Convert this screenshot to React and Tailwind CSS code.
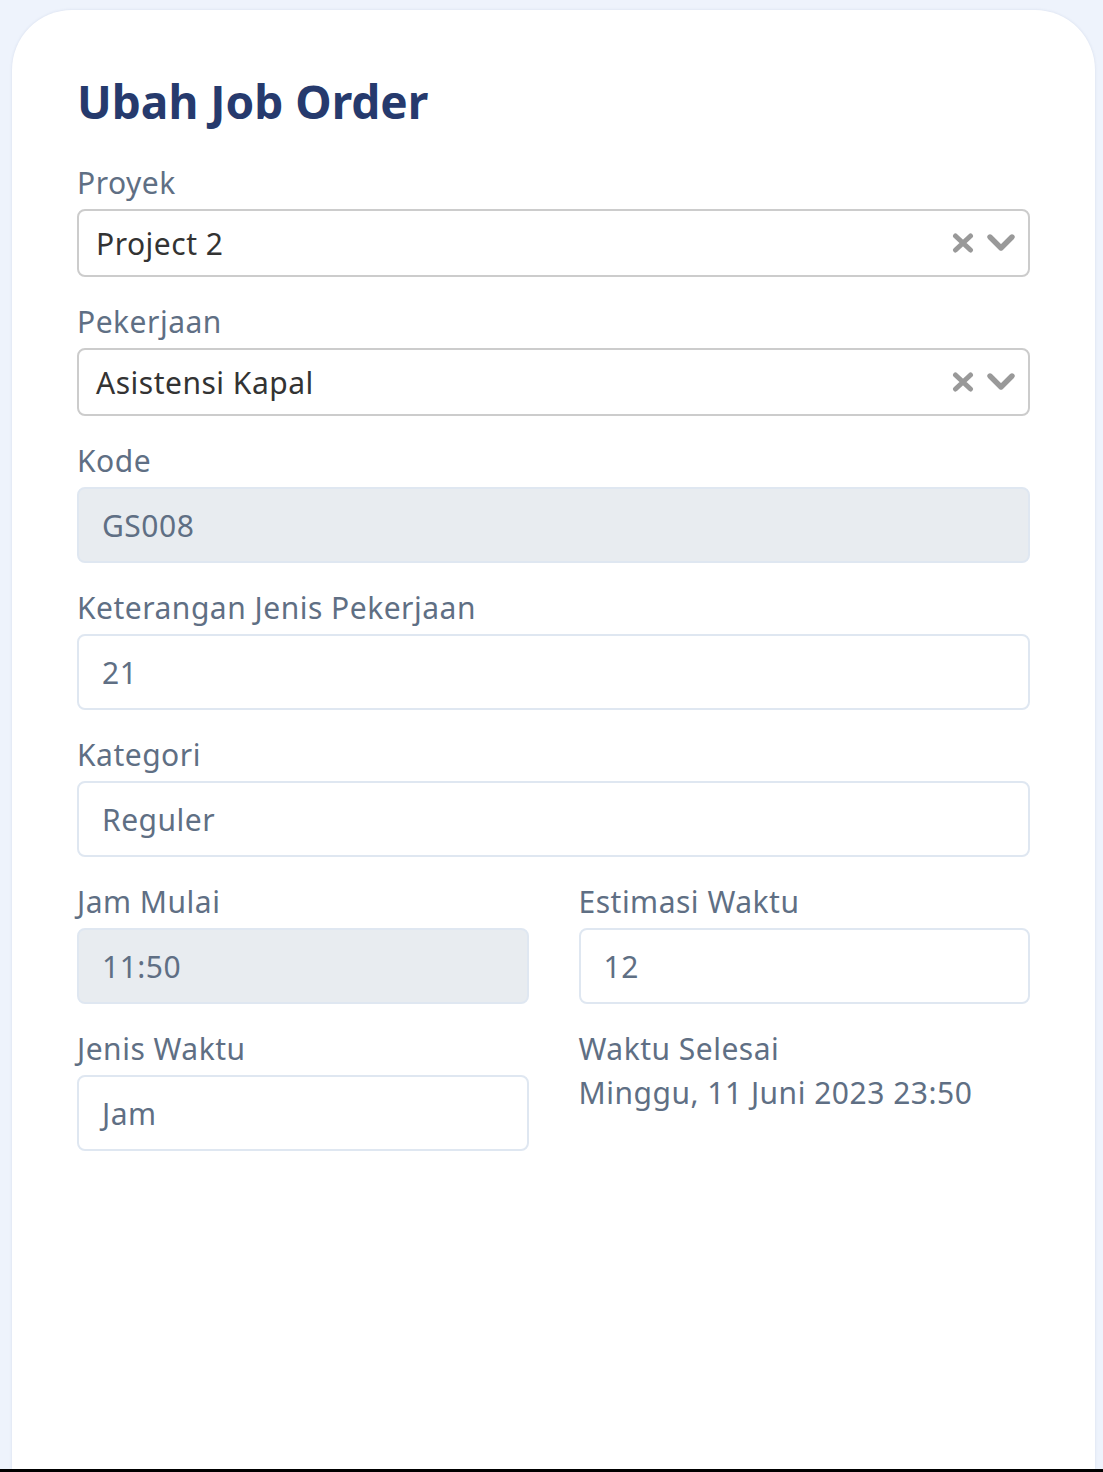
import React from "react";

const font = { fontFamily: '"Noto Sans", "Open Sans", sans-serif' };

function Label({ children }) {
  return (
    <div className="mb-[8px] text-[30px] leading-[36px] tracking-[0.5px] text-[#5f6f84]">
      {children}
    </div>
  );
}

function ClearIcon() {
  return (
    <svg width="24" height="20" viewBox="0 0 24 20" className="text-[#999999]">
      <path
        d="M4.5 3 L19.5 17 M19.5 3 L4.5 17"
        stroke="currentColor"
        strokeWidth="5"
        strokeLinecap="round"
      />
    </svg>
  );
}

function ChevronIcon() {
  return (
    <svg width="32" height="22" viewBox="0 0 32 22" className="text-[#999999]">
      <path
        d="M5 5 L16 16 L27 5"
        stroke="currentColor"
        strokeWidth="5.4"
        strokeLinecap="round"
        strokeLinejoin="round"
        fill="none"
      />
    </svg>
  );
}

function SelectField({ label, value }) {
  return (
    <div>
      <Label>{label}</Label>
      <div className="flex h-[68px] items-center rounded-[8px] border-2 border-[#cccccc] bg-white pl-[17px] pr-[11px]">
        <span className="flex-1 text-[30px] tracking-[0.5px] text-[#333333]">
          {value}
        </span>
        <div className="flex items-center gap-[10px]">
          <ClearIcon />
          <ChevronIcon />
        </div>
      </div>
    </div>
  );
}

function InputField({ label, value, disabled }) {
  return (
    <div>
      <Label>{label}</Label>
      <div
        className={
          "flex h-[76px] items-center rounded-[8px] border-2 border-[#dfe7f1] px-[23px] text-[30px] tracking-[0.5px] text-[#5f6f84] " +
          (disabled ? "bg-[#e8ecf0]" : "bg-white")
        }
      >
        {value}
      </div>
    </div>
  );
}

export default function App() {
  return (
    <div className="flex min-h-[1472px] flex-col bg-[#eef3fc]" style={font}>
      <div className="flex flex-1 pl-[12px] pr-[8px] pt-[10px]">
        <div className="flex-1 rounded-t-[60px] bg-white px-[65px] pt-[63px] shadow-[0_0_3px_rgba(80,100,150,0.15)]">
          <h1 className="mb-[36px] text-[46px] font-bold leading-[56px] text-[#263a6d]">
            Ubah Job Order
          </h1>
          <div className="flex flex-col gap-[27px]">
            <SelectField label="Proyek" value="Project 2" />
            <SelectField label="Pekerjaan" value="Asistensi Kapal" />
            <InputField label="Kode" value="GS008" disabled />
            <InputField label="Keterangan Jenis Pekerjaan" value="21" />
            <InputField label="Kategori" value="Reguler" />
            <div className="grid grid-cols-2 gap-x-[50px] gap-y-[27px]">
              <InputField label="Jam Mulai" value="11:50" disabled />
              <InputField label="Estimasi Waktu" value="12" />
              <InputField label="Jenis Waktu" value="Jam" />
              <div>
                <Label>Waktu Selesai</Label>
                <div className="mt-[5px] text-[30px] leading-[36px] tracking-[0.5px] text-[#5f6f84]">
                  Minggu, 11 Juni 2023 23:50
                </div>
              </div>
            </div>
          </div>
        </div>
      </div>
      <div className="h-[3px] bg-black" />
    </div>
  );
}
